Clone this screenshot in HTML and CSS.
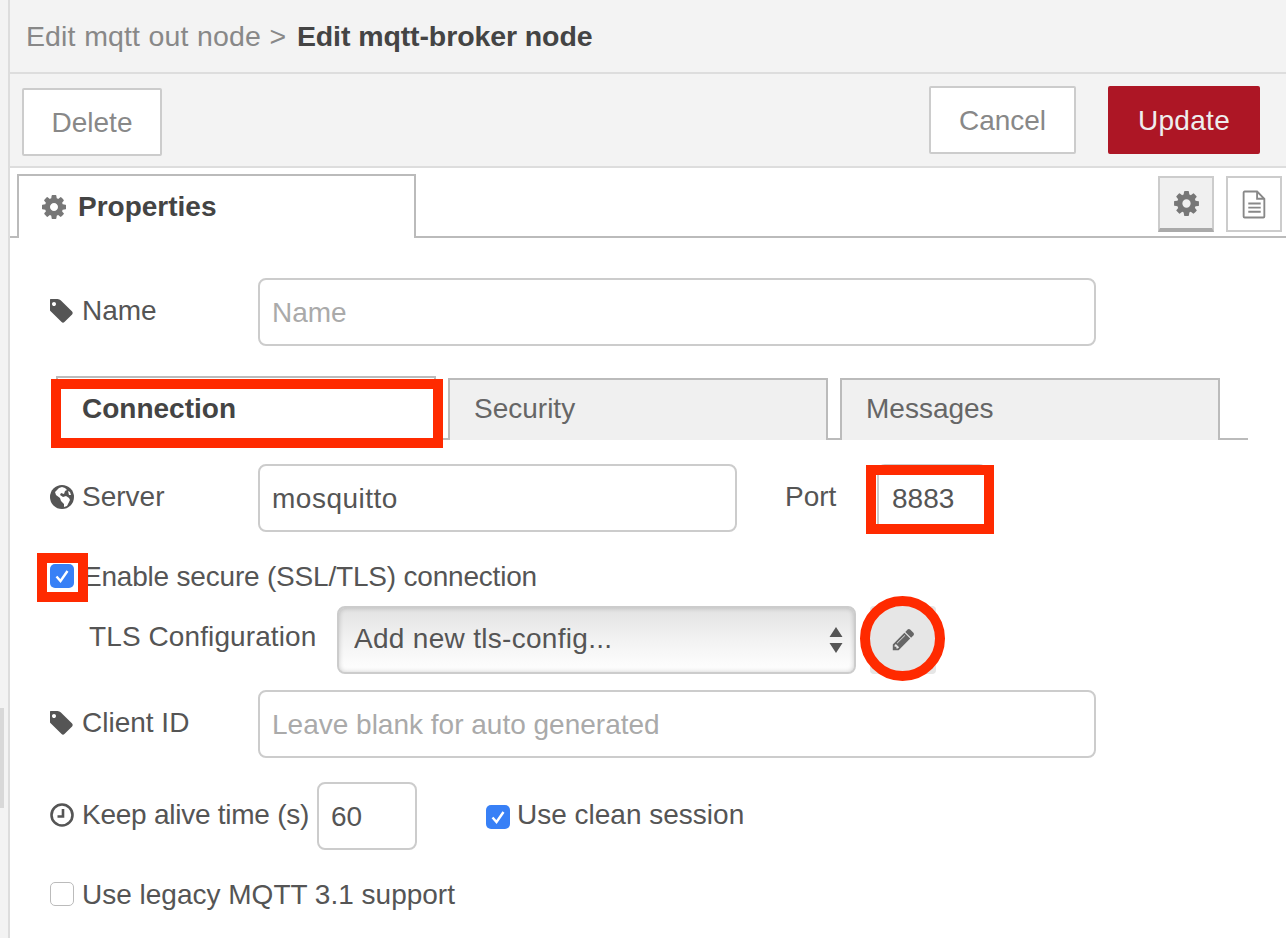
FILE: index.html
```html
<!DOCTYPE html>
<html lang="en">
<head>
<meta charset="utf-8">
<title>Edit mqtt-broker node</title>
<link rel="stylesheet" href="styles.css">
</head>
<body>
<div class="page">
  <aside class="gutter"><div class="grip"></div></aside>
  <main class="tray">
    <header class="title"><span class="crumb">Edit mqtt out node &gt; </span><b class="title-now">Edit mqtt-broker node</b></header>
    <div class="toolbar">
      <button class="btn btn-delete">Delete</button>
      <div class="actions">
        <button class="btn btn-cancel">Cancel</button>
        <button class="btn btn-primary">Update</button>
      </div>
    </div>
    <div class="tabbar">
      <div class="main-tab">
        <svg class="ico-cog" viewBox="0 0 1792 1792"><path d="M1152 896q0-106-75-181t-181-75-181 75-75 181 75 181 181 75 181-75 75-181zm512-109v222q0 12-8 23t-20 13l-185 28q-19 54-39 91 35 50 107 138 10 12 10 25t-9 23q-27 37-99 108t-94 71q-12 0-26-9l-138-108q-44 23-91 38-16 136-29 186-7 28-36 28h-222q-14 0-24.5-8.5t-11.5-21.5l-28-184q-49-16-90-37l-141 107q-10 9-25 9-14 0-25-11-126-114-165-168-7-10-7-23 0-12 8-23 15-21 51-66.5t54-70.5q-27-50-41-99l-183-27q-13-2-21-12.5t-8-23.5v-222q0-12 8-23t19-13l186-28q14-46 39-92-40-57-107-138-10-12-10-24 0-10 9-23 26-36 98.5-107.5t94.5-71.5q13 0 26 10l138 107q44-23 91-38 16-136 29-186 7-28 36-28h222q14 0 24.5 8.5t11.5 21.5l28 184q49 16 90 37l142-107q9-9 24-9 13 0 25 10 129 119 165 170 7 8 7 22 0 12-8 23-15 21-51 66.5t-54 70.5q26 50 41 98l183 28q13 2 21 12.5t8 23.5z"/></svg>
        <b>Properties</b>
      </div>
      <div class="side-btns">
        <div class="side-btn side-on"><svg class="ico-cog-lg" viewBox="0 0 1792 1792"><path d="M1152 896q0-106-75-181t-181-75-181 75-75 181 75 181 181 75 181-75 75-181zm512-109v222q0 12-8 23t-20 13l-185 28q-19 54-39 91 35 50 107 138 10 12 10 25t-9 23q-27 37-99 108t-94 71q-12 0-26-9l-138-108q-44 23-91 38-16 136-29 186-7 28-36 28h-222q-14 0-24.5-8.5t-11.5-21.5l-28-184q-49-16-90-37l-141 107q-10 9-25 9-14 0-25-11-126-114-165-168-7-10-7-23 0-12 8-23 15-21 51-66.5t54-70.5q-27-50-41-99l-183-27q-13-2-21-12.5t-8-23.5v-222q0-12 8-23t19-13l186-28q14-46 39-92-40-57-107-138-10-12-10-24 0-10 9-23 26-36 98.5-107.5t94.5-71.5q13 0 26 10l138 107q44-23 91-38 16-136 29-186 7-28 36-28h222q14 0 24.5 8.5t11.5 21.5l28 184q49 16 90 37l142-107q9-9 24-9 13 0 25 10 129 119 165 170 7 8 7 22 0 12-8 23-15 21-51 66.5t-54 70.5q26 50 41 98l183 28q13 2 21 12.5t8 23.5z"/></svg></div>
        <div class="side-btn"><svg class="ico-file" viewBox="0 0 24 28"><path d="M2.5 1.500h12l7 7v17a1 1 0 0 1-1 1h-18a1 1 0 0 1-1-1v-23a1 1 0 0 1 1-1z M14.500 1.500v7h7 M6 13h12 M6 17h12 M6 21h12"/></svg></div>
      </div>
    </div>
    <form class="form">
      <div class="row row-name">
        <label class="lbl">
          <svg class="ico" viewBox="0 128 1536 1536"><path d="M384 448q0-53-37.5-90.5t-90.5-37.5-90.5 37.5-37.5 90.5 37.5 90.5 90.5 37.5 90.5-37.5 37.5-90.5zm1067 576q0 53-37 90l-491 492q-39 38-91 38-53 0-90-38l-715-716q-38-37-64.5-101t-26.5-117v-416q0-52 38-90t90-38h416q53 0 117 26.5t102 64.5l715 714q38 40 38 91z"/></svg>
          Name</label>
        <input class="inp inp-wide" placeholder="Name">
      </div>
      <div class="subtabs">
        <div class="subtab subtab-on">Connection</div>
        <div class="subtab">Security</div>
        <div class="subtab">Messages</div>
      </div>
      <div class="row row-server">
        <label class="lbl">
          <svg class="ico" viewBox="0 0 24 24"><circle cx="12" cy="12" r="12" fill="#555"/><path fill="#fff" d="M9 3l3-1 3 1 2 2-2 1-1 3-3-1-1 2 3 2 3-1 3 2 1 2-3 6-3 1v-3l-3-3-1-3-4-3-1-3 3-3z M18 6l2 1 1 3-2 0z"/></svg>
          Server</label>
        <input class="inp inp-server" value="mosquitto">
        <label class="port-lbl">Port</label>
        <input class="inp inp-port" value="8883">
      </div>
      <div class="row row-secure">
        <span class="chk chk-on"><svg viewBox="0 0 24 24"><path d="M6.500 12.500l4 4.500 7-10"/></svg></span>
        <span class="chk-text chk-text-tight">Enable secure (SSL/TLS) connection</span>
      </div>
      <div class="row row-tls">
        <label class="lbl-tls">TLS Configuration</label>
        <div class="sel-wrap">
          <select class="sel"><option>Add new tls-config...</option></select>
          <svg class="sel-arrows" viewBox="0 0 14 26"><path d="M7 0l6.500 10H.5z M7 26L.5 16h13z"/></svg>
        </div>
        <button type="button" class="edit-btn"><svg class="ico-pencil" viewBox="0 0 1792 1792"><path d="M491 1536l91-91-235-235-91 91v107h128v128h107zm523-928q0-22-22-22-10 0-17 7l-542 542q-7 7-7 17 0 22 22 22 10 0 17-7l542-542q7-7 7-17zm-54-192l416 416-832 832h-416v-416zm683 96q0 53-37 90l-166 166-416-416 166-165q36-38 90-38 53 0 91 38l235 234q37 39 37 91z"/></svg></button>
      </div>
      <div class="row row-client">
        <label class="lbl">
          <svg class="ico" viewBox="0 128 1536 1536"><path d="M384 448q0-53-37.5-90.5t-90.5-37.5-90.5 37.5-37.5 90.5 37.5 90.5 90.5 37.5 90.5-37.5 37.5-90.5zm1067 576q0 53-37 90l-491 492q-39 38-91 38-53 0-90-38l-715-716q-38-37-64.5-101t-26.5-117v-416q0-52 38-90t90-38h416q53 0 117 26.5t102 64.5l715 714q38 40 38 91z"/></svg>
          Client ID</label>
        <input class="inp inp-wide" placeholder="Leave blank for auto generated">
      </div>
      <div class="row row-keep">
        <label class="lbl lbl-keep">
          <svg class="ico" viewBox="0 0 24 24"><circle cx="12" cy="12" r="10.500" class="clock-face"/><path class="clock-hand" d="M13 6v7.500H7.500"/></svg>
          Keep alive time (s)</label>
        <input class="inp inp-keep" value="60">
        <span class="chk chk-on chk-clean"><svg viewBox="0 0 24 24"><path d="M6.500 12.500l4 4.500 7-10"/></svg></span>
        <span class="chk-text">Use clean session</span>
      </div>
      <div class="row row-legacy">
        <span class="chk"></span>
        <span class="chk-text">Use legacy MQTT 3.1 support</span>
      </div>
    </form>
  </main>
  <div class="mark mark-conn"></div>
  <div class="mark mark-port"></div>
  <div class="mark mark-check"></div>
  <div class="mark mark-edit"></div>
</div>
</body>
</html>
```
FILE: styles.css
```css
* { box-sizing: border-box; }
html, body { margin: 0; padding: 0; background: #fff; }
body { font-family: "Liberation Sans", Arial, sans-serif; color: #555; font-size: 28px; }
.page { position: relative; display: flex; width: 1286px; height: 938px; overflow: hidden; }
.gutter { width: 10px; flex: none; background: #f3f3f3; border-right: 2px solid #ddd; padding-top: 708px; }
.grip { width: 4px; height: 100px; background: #d8d8d8; }
.tray { flex: 1; min-width: 0; }
.title { height: 74px; background: #f3f3f3; border-bottom: 2px solid #ddd; padding: 20px 0 0 16px; font-size: 28.5px; line-height: 32px; color: #444; white-space: pre; }
.crumb { color: #888; letter-spacing: .1px; word-spacing: .6px; }
.title-now { letter-spacing: -.1px; margin-left: 2px; }
.toolbar { height: 94px; background: #f3f3f3; border-bottom: 2px solid #ddd; display: flex; justify-content: space-between; padding: 12px 26px 0 12px; }
.actions { display: flex; gap: 32px; }
.btn { height: 68px; border-radius: 2px; border: 2px solid #ccc; background: #fff; color: #888; font: 28px "Liberation Sans", Arial, sans-serif; padding: 2px 0 0; }
.btn-delete { width: 140px; margin-top: 2px; }
.btn-cancel { width: 147px; }
.btn-primary { width: 152px; background: #ad1625; border-color: #ad1625; color: #eee; letter-spacing: .3px; }
.tabbar { height: 70px; display: flex; justify-content: space-between; border-bottom: 2px solid #bbb; padding: 6px 4px 0 7px; }
.main-tab { width: 399px; height: 64px; background: #fff; border: 2px solid #bbb; border-bottom: 0; display: flex; align-items: center; gap: 10px; padding: 0 0 0 21px; font-size: 28px; color: #444; position: relative; }
.ico-cog { width: 28px; height: 28px; fill: #777; }
.side-btns { display: flex; gap: 12px; padding-top: 2px; }
.side-btn { width: 56px; height: 56px; border: 2px solid #ccc; display: flex; align-items: center; justify-content: center; }
.side-on { background: #f0f0f0; border-bottom: 4px solid #aaa; }
.ico-cog-lg { width: 29px; height: 29px; fill: #777; }
.ico-file { width: 25px; height: 29px; fill: none; stroke: #888; stroke-width: 1.800; }
.form { padding-left: 40px; }
.row { display: flex; align-items: center; }
.row-name { margin-top: 40px; height: 68px; }
.row-server { margin-top: 24px; height: 68px; }
.row-secure { margin-top: 32px; height: 24px; }
.row-tls { margin-top: 18px; height: 68px; }
.row-client { margin-top: 16px; height: 68px; }
.row-keep { margin-top: 24px; height: 68px; }
.row-legacy { margin-top: 32px; height: 24px; }
.lbl { width: 208px; flex: none; display: flex; align-items: center; gap: 8px; padding-bottom: 2px; }
.ico { width: 24px; height: 24px; flex: none; fill: #555; }
.clock-face { fill: none; stroke: #555; stroke-width: 2.600; }
.clock-hand { fill: none; stroke: #555; stroke-width: 2.600; }
.inp { height: 68px; border: 2px solid #ccc; border-radius: 8px; background: #fff; color: #555; font: 28px "Liberation Sans", Arial, sans-serif; padding: 2px 12px 0; outline: 0; }
.inp::placeholder { color: #aaa; opacity: 1; }
.inp-wide { width: 838px; }
.inp-server { width: 479px; letter-spacing: .5px; }
.port-lbl { margin-left: 48px; width: 92px; flex: none; padding-bottom: 2px; }
.inp-port { width: 110px; padding-left: 13px; }
.subtabs { margin-top: 30px; height: 64px; width: 1192px; margin-left: 6px; display: flex; align-items: flex-end; gap: 12px; border-bottom: 2px solid #bbb; }
.subtab { width: 380px; height: 62px; background: #f0f0f0; border: 2px solid #bbb; border-bottom: 0; color: #666; padding: 14px 0 0 24px; line-height: 30px; margin-bottom: -2px; }
.subtab-on { height: 64px; background: #fff; color: #444; font-weight: bold; padding-top: 16px; }
.chk { width: 24px; height: 24px; flex: none; border: 1.500px solid #bbb; border-radius: 5px; background: #fff; display: block; }
.chk-on { background: #3880f6; border: 0; }
.chk svg { display: block; width: 24px; height: 24px; fill: none; stroke: #fff; stroke-width: 2.400; }
.chk-text { margin-left: 8px; padding-top: 2px; white-space: nowrap; }
.chk-text-tight { margin-left: 9px; letter-spacing: -.2px; }
.chk-clean { margin-left: 69px; margin-top: 2px; }
.chk-clean + .chk-text { margin-left: 7px; padding: 0 0 3px; }
.lbl-keep { width: 267px; padding-bottom: 3px; letter-spacing: -.25px; }
.inp-keep { width: 100px; }
.lbl-tls { width: 287px; padding-left: 39px; flex: none; white-space: nowrap; padding-bottom: 6px; letter-spacing: .1px; }
.sel-wrap { position: relative; width: 519px; height: 68px; }
.sel { width: 100%; height: 100%; appearance: none; border: 2px solid #ccc; border-radius: 8px; background: linear-gradient(#e2e2e2, #f2f2f2 50%, #fff); color: #555; font: 28px "Liberation Sans", Arial, sans-serif; letter-spacing: .3px; padding: 0 0 4px 15px; box-shadow: inset 0 0 5px rgba(0,0,0,.2); outline: 0; }
.sel-arrows { position: absolute; right: 13px; top: 21px; width: 14px; height: 26px; fill: #555; pointer-events: none; }
.edit-btn { width: 66px; height: 68px; margin-left: 14px; border: 0; border-radius: 4px; background: #e6e6e6; display: flex; align-items: center; justify-content: center; padding: 0 0 2px 0; }
.ico-pencil { width: 25px; height: 25px; fill: #666; }
.mark { position: absolute; border: 10px solid #ff2a00; }
.mark-conn { left: 51px; top: 379px; width: 392px; height: 69px; }
.mark-port { left: 866px; top: 465px; width: 128px; height: 69px; }
.mark-check { left: 37px; top: 553px; width: 51px; height: 49px; }
.mark-edit { left: 860px; top: 596px; width: 85px; height: 85px; border-radius: 50%; }
```
